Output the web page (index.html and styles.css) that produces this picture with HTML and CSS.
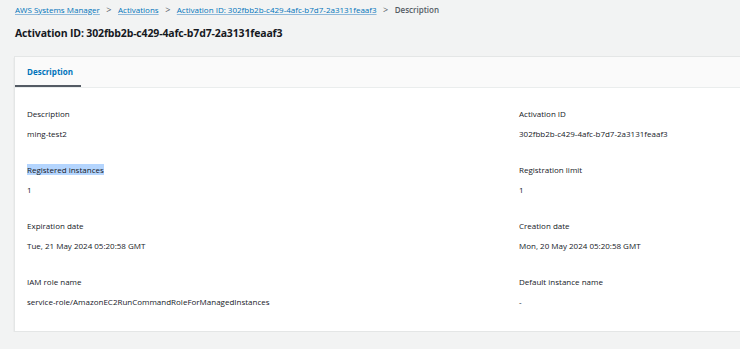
FILE: index.html
```html
<!DOCTYPE html>
<html lang="en">
<head>
    <meta charset="UTF-8">
    <title>Activation ID: 302fbb2b-c429-4afc-b7d7-2a3131feaaf3</title>
    <link rel="stylesheet" href="styles.css">
</head>
<body>
<nav class="breadcrumbs">
    <a href="#">AWS Systems Manager</a>
    <span class="sep">&gt;</span>
    <a href="#">Activations</a>
    <span class="sep">&gt;</span>
    <a href="#">Activation ID: 302fbb2b-c429-4afc-b7d7-2a3131feaaf3</a>
    <span class="sep">&gt;</span>
    <span class="current">Description</span>
</nav>
<h1 class="page-title">Activation ID: 302fbb2b-c429-4afc-b7d7-2a3131feaaf3</h1>

<div class="panel">
    <div class="tabs">
        <div class="tab active">Description</div>
    </div>
    <div class="details">
        <div class="field">
            <div class="label">Description</div>
            <div class="value">ming-test2</div>
        </div>
        <div class="field">
            <div class="label">Activation ID</div>
            <div class="value">302fbb2b-c429-4afc-b7d7-2a3131feaaf3</div>
        </div>
        <div class="field">
            <div class="label"><span class="selected">Registered instances</span></div>
            <div class="value">1</div>
        </div>
        <div class="field">
            <div class="label">Registration limit</div>
            <div class="value">1</div>
        </div>
        <div class="field">
            <div class="label">Expiration date</div>
            <div class="value">Tue, 21 May 2024 05:20:58 GMT</div>
        </div>
        <div class="field">
            <div class="label">Creation date</div>
            <div class="value">Mon, 20 May 2024 05:20:58 GMT</div>
        </div>
        <div class="field">
            <div class="label">IAM role name</div>
            <div class="value">service-role/AmazonEC2RunCommandRoleForManagedInstances</div>
        </div>
        <div class="field">
            <div class="label">Default instance name</div>
            <div class="value">-</div>
        </div>
    </div>
</div>
</body>
</html>
```

FILE: styles.css
```css
html, body {
    overflow: hidden;
}
body {
    margin: 0;
    background-color: #f2f3f3;
    color: #16191f;
    font-family: 'Open Sans', sans-serif;
    padding: 0 0 0 15px;
}
.breadcrumbs {
    display: flex;
    align-items: center;
    gap: 6.5px;
    height: 18px;
    font-size: 8px;
}
.breadcrumbs a {
    color: #0073bb;
    text-decoration: underline;
    text-decoration-color: #8fb9da;
}
.breadcrumbs .sep {
    color: #545b64;
    font-size: 9px;
}
.breadcrumbs .current {
    color: #545b64;
    font-weight: 600;
}
.page-title {
    margin: 0;
    font-size: 10.5px;
    letter-spacing: -0.15px;
    font-weight: 700;
    height: 30px;
    line-height: 30px;
}
.panel {
    width: 1010px;
    margin-top: 8px;
    margin-left: -1px;
    background-color: white;
    border: 1px solid #e4e6e6;
    box-shadow: 0 2px 1px rgba(0, 0, 0, 0.15);
}
.tabs {
    display: flex;
    height: 30px;
    background-color: #fafafa;
    border-bottom: 1px solid #eaeded;
}
.tab {
    width: 66px;
    padding-left: 12px;
    box-sizing: border-box;
    line-height: 29px;
    font-size: 8px;
    font-weight: 700;
    color: #0073bb;
}
.tab.active {
    border-bottom: 2px solid #545b64;
}
.details {
    display: grid;
    grid-template-columns: 492px 492px;
    padding: 16px 12px 19px 12px;
    row-gap: 16px;
    font-size: 8px;
}
.field {
    height: 40px;
}
.label {
    line-height: 20px;
    color: #16191f;
}
.value {
    line-height: 20px;
    color: #16191f;
}
.selected {
    background-color: #b4d5fe;
}
```
